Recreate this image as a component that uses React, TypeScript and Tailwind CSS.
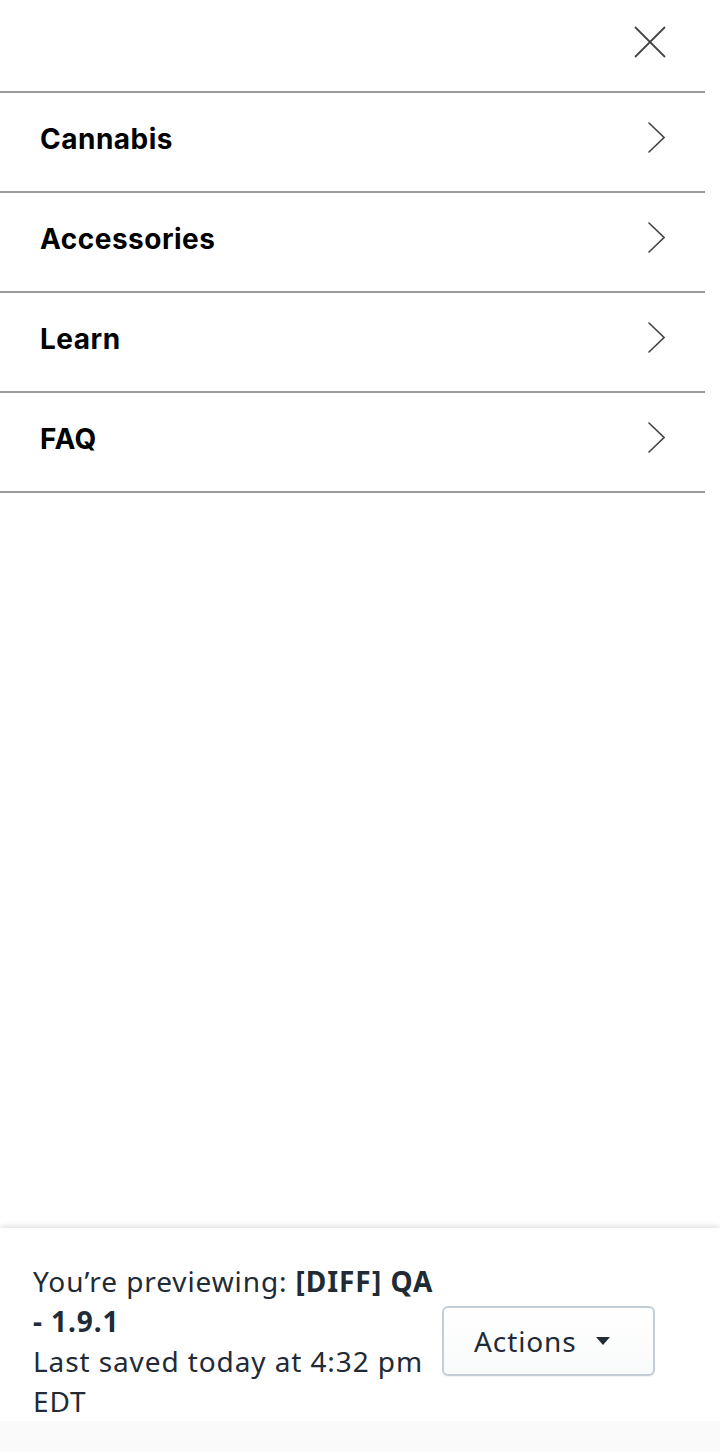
import React from "react";

const items = ["Cannabis", "Accessories", "Learn", "FAQ"];

function Chevron() {
  return (
    <svg width="17" height="31" viewBox="0 0 17 31" fill="none">
      <polyline points="1,1 16,15.5 1,30" stroke="#444" strokeWidth="1.6" strokeLinecap="round" strokeLinejoin="miter" />
    </svg>
  );
}

export default function App() {
  return (
    <div className="w-[720px] h-[1452px] flex flex-col bg-white overflow-hidden">
      <header className="h-[91px] flex justify-end pr-[54px] pt-[26px]">
        <svg width="32" height="32" viewBox="0 0 32 32" fill="none">
          <line x1="1" y1="1" x2="31" y2="31" stroke="#444" strokeWidth="1.8" />
          <line x1="31" y1="1" x2="1" y2="31" stroke="#444" strokeWidth="1.8" />
        </svg>
      </header>
      <nav className="w-[705px] border-t-2 border-[#9a9a9a]">
        {items.map((t) => (
          <div
            key={t}
            className="h-[100px] border-b-2 border-[#9a9a9a] flex items-center justify-between pl-[40px] pr-[40px]"
          >
            <span className="text-[28px] tracking-[0.5px] font-bold text-black leading-none -mt-[6px] font-['Inter',sans-serif]">{t}</span>
            <span className="-mt-[10px]">
              <Chevron />
            </span>
          </div>
        ))}
      </nav>
      <div className="flex-1" />
      <footer className="shadow-[0_-2px_6px_rgba(0,0,0,0.12)] bg-white">
        <div className="flex items-center pl-[33px] pr-[65px] pt-[33px] font-['Noto_Sans',sans-serif] text-[#212b36] tracking-[0.9px]">
          <div className="w-[400px] text-[28px] leading-[40px] whitespace-nowrap">
            <div>
              You’re previewing: <span className="font-bold">[DIFF] QA</span>
            </div>
            <div className="font-bold">- 1.9.1</div>
            <div>Last saved today at 4:32 pm</div>
            <div>EDT</div>
          </div>
          <button className="ml-[9px] w-[213px] h-[70px] rounded-[6px] border-2 border-[#c4cdd5] bg-gradient-to-b from-white to-[#f9fafb] flex items-center justify-start pl-[30px] gap-[19px] text-[28px] text-[#212b36] shadow-[0_1px_0_rgba(22,29,37,0.05)]">
            <span>Actions</span>
            <svg width="14" height="9" viewBox="0 0 14 9">
              <polygon points="0,0 14,0 7,8" fill="#212b36" />
            </svg>
          </button>
        </div>
        <div className="h-[31px] bg-[#fafafa]" />
      </footer>
    </div>
  );
}
